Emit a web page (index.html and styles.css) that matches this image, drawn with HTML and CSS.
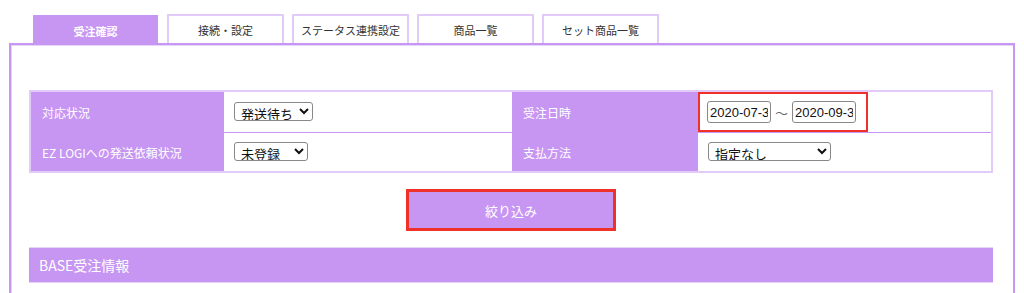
FILE: index.html
```html
<!DOCTYPE html>
<html lang="ja">
<head>
<meta charset="UTF-8">
<title>受注確認</title>
<link rel="stylesheet" href="styles.css">
</head>
<body>

<!-- タブ -->
<div class="tabs">
  <div class="tab active">受注確認</div>
  <div class="tab">接続・設定</div>
  <div class="tab">ステータス連携設定</div>
  <div class="tab">商品一覧</div>
  <div class="tab">セット商品一覧</div>
</div>

<div class="panel">
  <table class="search">
    <tr>
      <th>対応状況</th>
      <td>
        <select class="sel">
          <option>発送待ち</option>
        </select>
      </td>
      <th>受注日時</th>
      <td class="date-cell">
        <span class="mark dates">
          <input class="date" type="text" value="2020-07-31"><span class="tilde">〜</span><input class="date" type="text" value="2020-09-30">
        </span>
      </td>
    </tr>
    <tr>
      <th>EZ LOGIへの発送依頼状況</th>
      <td>
        <select class="sel">
          <option>未登録&nbsp;&nbsp;&nbsp;</option>
        </select>
      </td>
      <th>支払方法</th>
      <td>
        <select class="sel wide">
          <option>指定なし</option>
        </select>
      </td>
    </tr>
  </table>

  <div class="actions">
    <span class="mark btn-wrap"><button class="filter-btn">絞り込み</button></span>
  </div>

  <div class="section-head">BASE受注情報</div>
</div>

</body>
</html>
```

FILE: styles.css
```css
body {
  margin: 0;
  background-color: #fff;
  font-family: "Noto Sans CJK JP", "Liberation Sans", sans-serif;
  font-size: 12px;
  color: #333;
}

/* tabs */
.tabs {
  display: flex;
  align-items: flex-end;
  gap: 8px;
  padding: 14px 0 0 33px;
}
.tab {
  box-sizing: border-box;
  width: 117px;
  height: 29px;
  border: 2px solid #e2cbf8;
  border-bottom: none;
  text-align: center;
  line-height: 29px;
  font-size: 11px;
  color: #333;
}
.tab.active {
  width: 125px;
  height: 28px;
  margin-right: 1px;
  border: none;
  background-color: #c795f2;
  color: #fff;
  font-weight: bold;
  line-height: 33px;
}

/* main panel */
.panel {
  margin: 0 9px;
  padding: 45px 20px 20px 18px;
  border: 2px solid #c795f2;
  border-bottom: none;
  box-shadow: inset 1px 1px 0 #e7d4fa;
  height: 400px;
}

/* search table */
.search {
  width: 964px;
  border-collapse: collapse;
  border: 2px solid #e2cbf8;
  table-layout: fixed;
}
.search th,
.search td {
  height: 38px;
  padding: 0 0 0 10px;
  border-bottom: 1px solid #c795f2;
  text-align: left;
  font-weight: normal;
}
.search tr:last-child th,
.search tr:last-child td {
  border-bottom: none;
}
.search th {
  background-color: #c795f2;
  color: #fff;
  font-size: 12px;
  padding-left: 11px;
}
.search th:nth-child(1) { width: 182px; }
.search td:nth-child(2) { width: 278px; }
.search th:nth-child(3) { width: 175px; }
.search td.date-cell {
  padding: 0;
}

.sel {
  font-family: inherit;
  font-size: 13px;
  height: 19px;
  padding: 0 2px;
  border: 1px solid #888;
  border-radius: 3px;
  background-color: #fff;
  color: #111;
}
.sel.wide {
  width: 123px;
}

/* red highlight boxes */
.mark {
  display: inline-block;
  border: 2px solid #ee3129;
}
.dates {
  box-sizing: border-box;
  width: 170px;
  padding: 7px 0 7px 7px;
  white-space: nowrap;
}
.date {
  box-sizing: border-box;
  width: 64px;
  height: 22px;
  padding: 0 2px;
  border: 1px solid #888;
  border-radius: 3px;
  font-family: "Liberation Sans", sans-serif;
  font-size: 13px;
  color: #111;
  vertical-align: middle;
}
.tilde {
  display: inline-block;
  width: 21px;
  text-align: center;
  color: #666;
  font-size: 13px;
  vertical-align: middle;
}

/* filter button */
.actions {
  display: flex;
  justify-content: center;
  padding: 16px 0 16px;
}
.mark.btn-wrap {
  border-width: 3px;
}
.filter-btn {
  width: 204px;
  height: 36px;
  border: none;
  background-color: #c795f2;
  color: #fff;
  font-family: inherit;
  font-size: 13px;
  display: block;
}

/* section header */
.section-head {
  width: 964px;
  box-sizing: border-box;
  height: 36px;
  line-height: 34px;
  padding-left: 10px;
  background-color: #c795f2;
  border-top: 1px solid #e7d4fa;
  border-bottom: 1px solid #e7d4fa;
  color: #fff;
  font-size: 14px;
}
```
